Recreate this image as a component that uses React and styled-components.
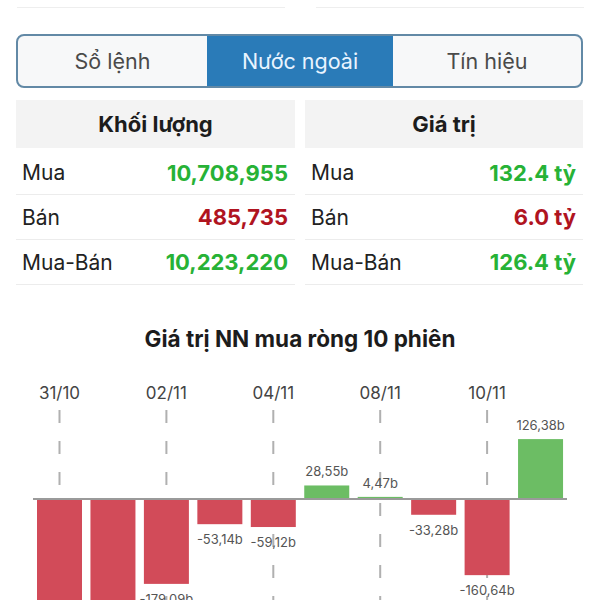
import React from "react";
import styled, { createGlobalStyle } from "styled-components";

const Global = createGlobalStyle`
  html, body { margin: 0; padding: 0; background: #ffffff; }
  body { font-family: Inter, "Noto Sans", "Liberation Sans", sans-serif; -webkit-font-smoothing: antialiased; }
`;

const Page = styled.div`
  width: 600px;
  height: 600px;
  overflow: hidden;
  background: #fff;
`;

const TopStrip = styled.div`
  display: grid;
  grid-template-columns: 268px 268px;
  justify-content: space-between;
  padding: 0 16px 0 17px;
`;

const StripCell = styled.div`
  height: 7px;
  border-bottom: 1px solid #eeeeee;
`;

const TabBar = styled.div`
  margin: 26px 17px 0 16px;
  height: 54px;
  box-sizing: border-box;
  border: 2px solid #6289a6;
  border-radius: 8px;
  overflow: hidden;
  background: #f7f8f9;
  display: grid;
  grid-template-columns: 189px 186px 1fr;
`;

const Tab = styled.div`
  display: flex;
  align-items: center;
  justify-content: center;
  font-size: 21.5px;
  color: ${(p) => (p.$active ? "#e9f4ff" : "#4a4a4a")};
  background: ${(p) => (p.$active ? "#2a7bb8" : "transparent")};
`;

const Tables = styled.div`
  margin: 12px 17px 0 16px;
  display: grid;
  grid-template-columns: 279px 278px;
  justify-content: space-between;
`;

const Table = styled.div`
  display: flex;
  flex-direction: column;
`;

const Header = styled.div`
  height: 48px;
  background: #f3f3f3;
  display: flex;
  align-items: center;
  justify-content: center;
  font-size: 22px;
  font-weight: 700;
  color: #1c1c1c;
`;

const Row = styled.div`
  box-sizing: border-box;
  height: ${(p) => (p.$first ? 47 : 45)}px;
  padding: ${(p) => (p.$first ? 3 : 0)}px 7px 0 6px;
  border-bottom: 1px solid #ececec;
  display: flex;
  align-items: center;
  justify-content: space-between;
`;

const Label = styled.span`
  font-size: 21px;
  color: #222;
`;

const Value = styled.span`
  font-size: 22px;
  font-weight: 700;
  color: ${(p) => (p.$tone === "down" ? "#b0141f" : "#27b236")};
`;

const Title = styled.div`
  margin-top: 41px;
  text-align: center;
  font-size: 22.5px;
  line-height: 26px;
  font-weight: 700;
  color: #1c1c1c;
`;

const Chart = styled.svg`
  display: block;
  margin-top: 8px;
`;

const volume = [
  ["Mua", "10,708,955", "up"],
  ["Bán", "485,735", "down"],
  ["Mua-Bán", "10,223,220", "up"],
];
const value = [
  ["Mua", "132.4 tỷ", "up"],
  ["Bán", "6.0 tỷ", "down"],
  ["Mua-Bán", "126.4 tỷ", "up"],
];

const bars = [-240, -232, -179.09, -53.14, -59.12, 28.55, 4.47, -33.28, -160.64, 126.38];
const dates = { 0: "31/10", 2: "02/11", 4: "04/11", 6: "08/11", 8: "10/11" };

const BASE = 139;
const SCALE = 0.474;
const X0 = 37;
const STEP = 53.45;
const W = 45;
const H = 240;

const fmt = (v) => v.toFixed(2).replace(".", ",") + "b";

function BarChart() {
  return (
    <Chart width="600" height={H} viewBox={`0 0 600 ${H}`}>
      {Object.entries(dates).map(([i, d]) => {
        const cx = X0 + Number(i) * STEP + W / 2;
        return (
          <g key={d}>
            <text x={cx} y="39" textAnchor="middle" fontSize="17" fill="#444" fontFamily="Inter, sans-serif">
              {d}
            </text>
            <line x1={cx} x2={cx} y1="50" y2={H} stroke="#b0b0b0" strokeWidth="2" strokeDasharray="13 18" />
          </g>
        );
      })}
      {bars.map((v, i) => {
        const x = X0 + i * STEP;
        const h = Math.abs(v) * SCALE;
        const up = v >= 0;
        const y = up ? BASE - h : BASE;
        const cx = x + W / 2;
        const ly = up ? y - 9 : y + h + 20;
        return (
          <g key={i}>
            <rect x={x} y={y} width={W} height={Math.max(h, 2)} fill={up ? "#6cbd64" : "#d24b59"} />
            {ly < H + 10 && (
              <text x={cx} y={ly} textAnchor="middle" fontSize="13" fill="#555" fontFamily="Inter, sans-serif">
                {fmt(v)}
              </text>
            )}
          </g>
        );
      })}
      <line x1="33" x2="567" y1={BASE} y2={BASE} stroke="#9a9a9a" strokeWidth="2" />
    </Chart>
  );
}

function StatTable({ title, rows }) {
  return (
    <Table>
      <Header>{title}</Header>
      {rows.map(([l, v, t], i) => (
        <Row key={l} $first={i === 0}>
          <Label>{l}</Label>
          <Value $tone={t}>{v}</Value>
        </Row>
      ))}
    </Table>
  );
}

export default function App() {
  return (
    <Page>
      <Global />
      <TopStrip>
        <StripCell />
        <StripCell />
      </TopStrip>
      <TabBar>
        <Tab>Sổ lệnh</Tab>
        <Tab $active>Nước ngoài</Tab>
        <Tab>Tín hiệu</Tab>
      </TabBar>
      <Tables>
        <StatTable title="Khối lượng" rows={volume} />
        <StatTable title="Giá trị" rows={value} />
      </Tables>
      <Title>Giá trị NN mua ròng 10 phiên</Title>
      <BarChart />
    </Page>
  );
}
